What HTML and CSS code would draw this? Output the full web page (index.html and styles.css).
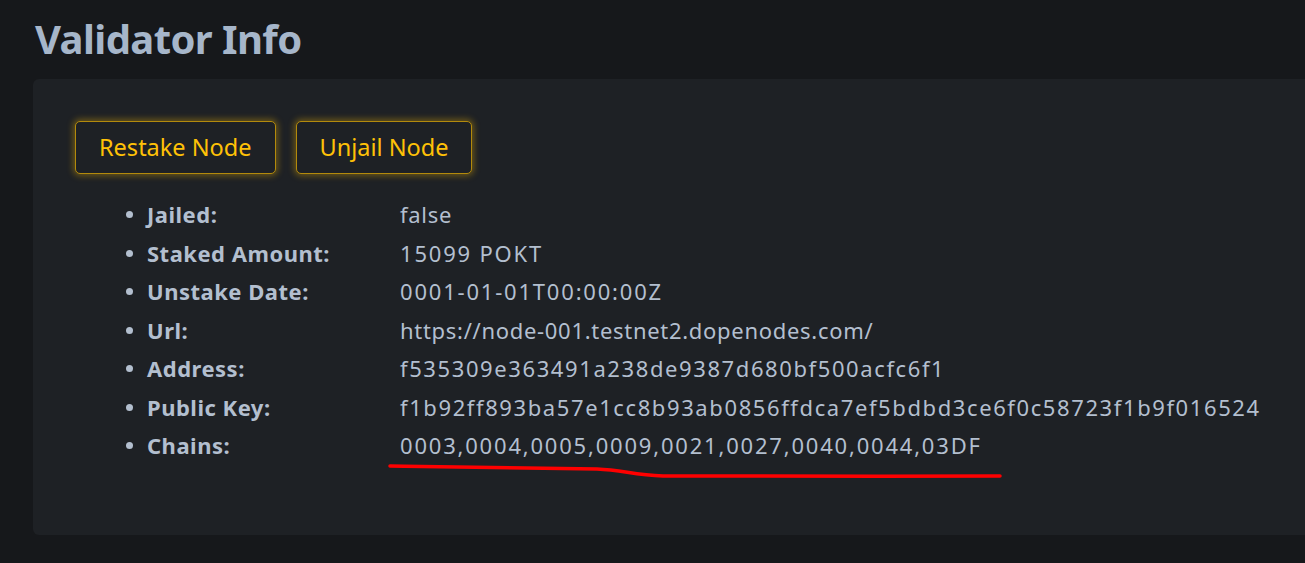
FILE: index.html
```html
<!DOCTYPE html>
<html>
<head>
<meta charset="utf-8">
<link rel="stylesheet" href="styles.css">
</head>
<body>
<main class="page">
  <h1 class="title">Validator Info</h1>
  <section class="card">
    <div class="actions">
      <button class="btn">Restake Node</button>
      <button class="btn">Unjail Node</button>
    </div>
    <ul class="info">
      <li><span class="label">Jailed:</span><span class="value">false</span></li>
      <li><span class="label">Staked Amount:</span><span class="value num">15099 POKT</span></li>
      <li><span class="label">Unstake Date:</span><span class="value num">0001-01-01T00:00:00Z</span></li>
      <li><span class="label">Url:</span><span class="value">https://node-001.testnet2.dopenodes.com/</span></li>
      <li><span class="label">Address:</span><span class="value hex">f535309e363491a238de9387d680bf500acfc6f1</span></li>
      <li><span class="label">Public Key:</span><span class="value hex">f1b92ff893ba57e1cc8b93ab0856ffdca7ef5bdbd3ce6f0c58723f1b9f016524</span></li>
      <li class="marked"><span class="label">Chains:</span><span class="value num">0003,0004,0005,0009,0021,0027,0040,0044,03DF</span>
        <svg class="scribble" width="620" height="26" viewBox="0 0 620 26"><path d="M2 10 C 80 11, 160 12, 209 13 C 235 14, 245 19, 275 20 C 350 21, 500 20, 612 20" fill="none" stroke="#ff0000" stroke-width="3.5" stroke-linecap="round"/></svg>
      </li>
    </ul>
  </section>
</main>
</body>
</html>
```
FILE: styles.css
```css
html, body {
  margin: 0;
  padding: 0;
  background: #16181b;
  height: 100%;
  overflow: hidden;
}
body {
  font-family: "Noto Sans", "Open Sans", sans-serif;
  color: #b3bfcf;
}
.page {
  padding: 12px 0 0 33px;
}
.title {
  margin: 0 0 0 2px;
  font-size: 40px;
  font-weight: 700;
  letter-spacing: -0.6px;
  line-height: 54px;
  color: #a6b6ca;
  height: 67px;
}
.card {
  background: #1e2125;
  border-radius: 6px 0 0 6px;
  padding: 42px 0 70px 42px;
}
.actions {
  display: flex;
  gap: 20px;
}
.btn {
  height: 53px;
  padding: 0 23px 2px;
  background: #1e2125;
  border: 1.5px solid #b38a0c;
  border-radius: 5px;
  box-shadow: 0 0 6px 2px rgba(200, 150, 10, 0.45);
  color: #ffc107;
  font-family: "Noto Sans", sans-serif;
  font-size: 23.5px;
}
.info {
  margin: 21px 0 0;
  padding: 0 0 0 72px;
  font-size: 22px;
  line-height: 38.5px;
}
.info li {
  display: flex;
  position: relative;
}
.info li::before {
  content: "";
  position: absolute;
  left: -21px;
  top: 16px;
  width: 7px;
  height: 7px;
  border-radius: 50%;
  background: #b3bfcf;
}
.label {
  width: 253px;
  flex: none;
  font-weight: 700;
  letter-spacing: 0.5px;
}
.value {
  white-space: nowrap;
  letter-spacing: 0.7px;
}
.value.num {
  letter-spacing: 1.8px;
}
.value.hex {
  letter-spacing: 1.6px;
}
.scribble {
  position: absolute;
  left: 241px;
  top: 30px;
}
```
